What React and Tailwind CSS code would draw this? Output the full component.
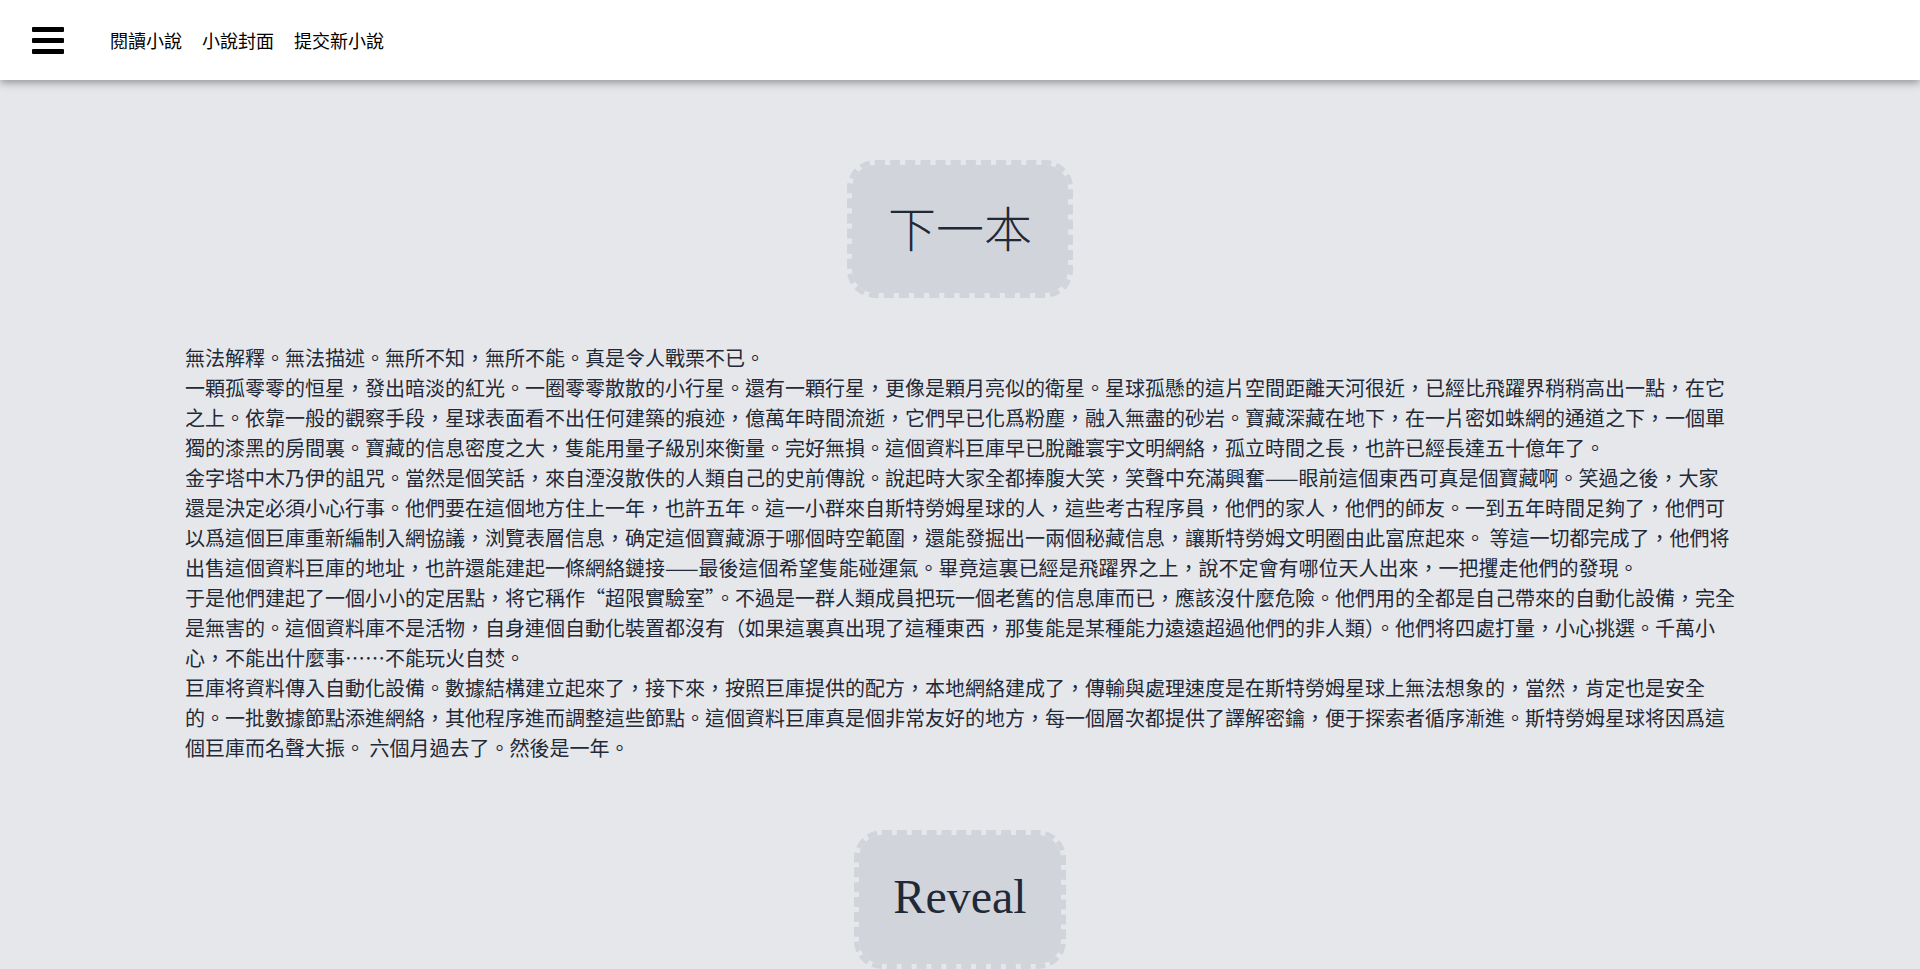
import React from "react";

const paragraphs = [
  ["無法解釋。無法描述。無所不知，無所不能。真是令人戰栗不已。"],
  [
    "一顆孤零零的恒星，發出暗淡的紅光。一圈零零散散的小行星。還有一顆行星，更像是顆月亮似的衛星。星球孤懸的這片空間距離天河很近，已經比飛躍界稍稍高出一點，在它",
    "之上。依靠一般的觀察手段，星球表面看不出任何建築的痕迹，億萬年時間流逝，它們早已化爲粉塵，融入無盡的砂岩。寶藏深藏在地下，在一片密如蛛網的通道之下，一個單",
    "獨的漆黑的房間裏。寶藏的信息密度之大，隻能用量子級別來衡量。完好無損。這個資料巨庫早已脫離寰宇文明網絡，孤立時間之長，也許已經長達五十億年了。",
  ],
  [
    "金字塔中木乃伊的詛咒。當然是個笑話，來自湮沒散佚的人類自己的史前傳說。說起時大家全都捧腹大笑，笑聲中充滿興奮——眼前這個東西可真是個寶藏啊。笑過之後，大家",
    "還是決定必須小心行事。他們要在這個地方住上一年，也許五年。這一小群來自斯特勞姆星球的人，這些考古程序員，他們的家人，他們的師友。一到五年時間足夠了，他們可",
    "以爲這個巨庫重新編制入網協議，浏覽表層信息，确定這個寶藏源于哪個時空範圍，還能發掘出一兩個秘藏信息，讓斯特勞姆文明圈由此富庶起來。 等這一切都完成了，他們将",
    "出售這個資料巨庫的地址，也許還能建起一條網絡鏈接——最後這個希望隻能碰運氣。畢竟這裏已經是飛躍界之上，說不定會有哪位天人出來，一把攫走他們的發現。",
  ],
  [
    "于是他們建起了一個小小的定居點，将它稱作“超限實驗室”。不過是一群人類成員把玩一個老舊的信息庫而已，應該沒什麼危險。他們用的全都是自己帶來的自動化設備，完全",
    "是無害的。這個資料庫不是活物，自身連個自動化裝置都沒有（如果這裏真出現了這種東西，那隻能是某種能力遠遠超過他們的非人類）。他們将四處打量，小心挑選。千萬小",
    "心，不能出什麼事……不能玩火自焚。",
  ],
  [
    "巨庫将資料傳入自動化設備。數據結構建立起來了，接下來，按照巨庫提供的配方，本地網絡建成了，傳輸與處理速度是在斯特勞姆星球上無法想象的，當然，肯定也是安全",
    "的。一批數據節點添進網絡，其他程序進而調整這些節點。這個資料巨庫真是個非常友好的地方，每一個層次都提供了譯解密鑰，便于探索者循序漸進。斯特勞姆星球将因爲這",
    "個巨庫而名聲大振。 六個月過去了。然後是一年。",
  ],
];

export default function App() {
  return (
    <div className="h-[969px] overflow-hidden bg-[#e5e7eb] font-['Noto_Sans_CJK_TC',sans-serif] text-[#1f2937]">
      <header className="relative z-10 flex h-[80px] items-center bg-white pl-8 shadow-[0_3px_8px_rgba(0,0,0,0.35)]">
        <button className="flex h-[27px] w-[32px] flex-col justify-between" aria-label="menu">
          <span className="block h-[5px] w-full rounded-[1px] bg-black"></span>
          <span className="block h-[5px] w-full rounded-[1px] bg-black"></span>
          <span className="block h-[5px] w-full rounded-[1px] bg-black"></span>
        </button>
        <nav className="ml-[46px] flex gap-5 text-[18px] leading-none text-black">
          <a>閱讀小說</a>
          <a>小說封面</a>
          <a>提交新小說</a>
        </nav>
      </header>

      <main className="flex flex-col items-center">
        <button className="mt-[80px] rounded-[28px] border-[5px] border-dashed border-[#d1d5db] bg-[#d1d5db] bg-clip-padding px-[36px] pb-[43px] pt-[37px] text-[48px] font-light leading-[48px] text-[#1f2937]">
          下一本
        </button>

        <article className="mt-[45px] w-[1550px] text-[20px] leading-[30px] text-[#1f2937]">
          {paragraphs.map((lines, i) => (
            <p key={i} className="whitespace-nowrap">
              {lines.map((l, j) => (
                <span key={j} className="block">
                  {l}
                </span>
              ))}
            </p>
          ))}
        </article>

        <button className="mt-[67px] rounded-[28px] border-[5px] border-dashed border-[#d1d5db] bg-[#d1d5db] bg-clip-padding px-[34px] pb-[43px] pt-[38px] font-['Liberation_Serif',serif] text-[48px] leading-[48px] text-[#1f2937]">
          Reveal
        </button>
      </main>
    </div>
  );
}
